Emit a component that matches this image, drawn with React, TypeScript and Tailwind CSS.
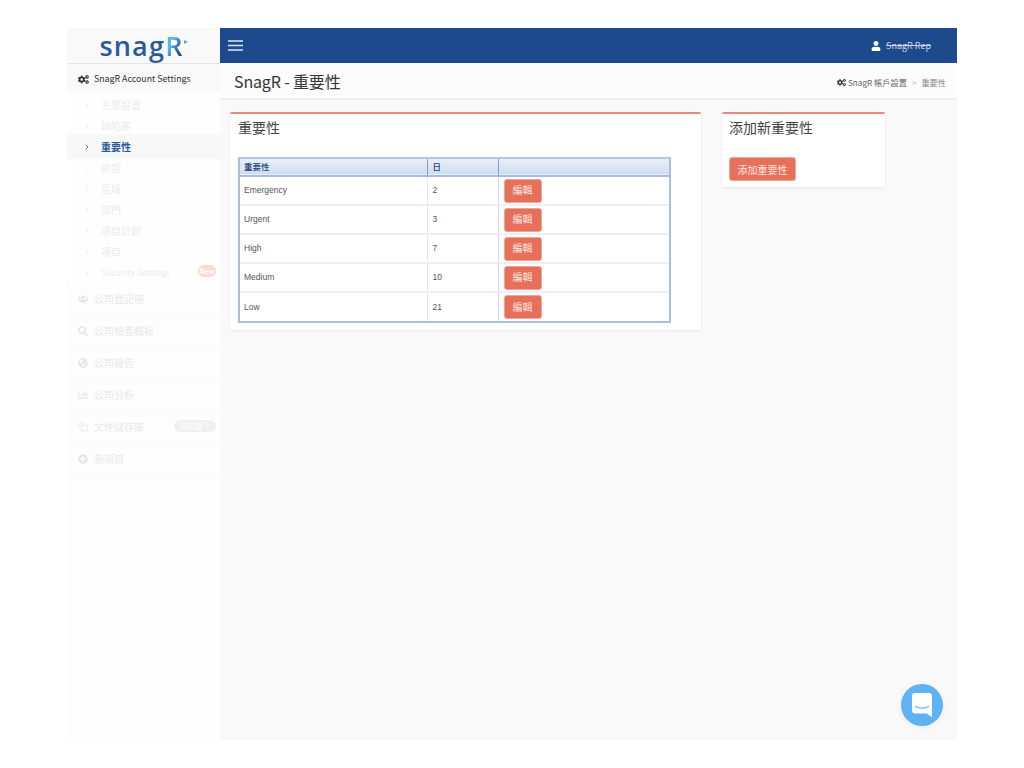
import { ChevronRight, Copy } from 'lucide-react'
import { FaChartBar, FaCogs, FaGlobeAmericas, FaPlusCircle, FaSearch, FaUser, FaUsers } from 'react-icons/fa'

const subItems = ['主要設置', '缺陷庫', '重要性', '術語', '區域', '部門', '項目計劃', '項目', 'Security Settings']

const rows = [
  { name: 'Emergency', days: 2 },
  { name: 'Urgent', days: 3 },
  { name: 'High', days: 7 },
  { name: 'Medium', days: 10 },
  { name: 'Low', days: 21 },
]

const mainItems = [
  { label: '公司登記冊', icon: FaUsers },
  { label: '公司檢查模板', icon: FaSearch },
  { label: '公司報告', icon: FaGlobeAmericas },
  { label: '公司分析', icon: FaChartBar },
  { label: '文件儲存庫', icon: Copy, badge: '測試版！' },
  { label: '新項目', icon: FaPlusCircle },
]

function Sidebar() {
  return (
    <aside className="w-[153px] shrink-0 bg-[#fdfdfd] flex flex-col">
      {/* Logo */}
      <div className="h-[36px] bg-[#f9f9f9] border-b border-[#e6e6e6] flex items-center justify-center">
        <span className="font-['Open_Sans',sans-serif] font-semibold text-[27px] leading-[34px] tracking-[1.2px] text-[#2a5a9c]">
          snag
          <span className="bg-gradient-to-br from-[#5ab4ea] from-40% to-[#23508f] to-70% bg-clip-text text-transparent">R</span>
        </span>
        <svg viewBox="0 0 4 4" className="h-[4px] w-[4px] -mt-[7px] text-[#5aa9e6]">
          <path d="M0 0l4 2-4 2Z" fill="currentColor" />
        </svg>
      </div>

      <div className="h-[27px] bg-[#f9f9f9] flex items-center pl-[11px] gap-[5px] pt-[3px]">
        <FaCogs className="h-[11px] w-[11px] text-[#333]" />
        <span className="text-[8.8px] text-[#333]">SnagR Account Settings</span>
      </div>

      {/* Sub menu */}
      <div className="flex flex-col pt-[3px] bg-[#fefefe]">
        {subItems.map((item) => {
          const active = item === '重要性'
          return (
            <div
              key={item}
              className={`relative flex items-center pl-[16px] gap-[10px] ${
                active ? 'h-[25px] -my-[2px] bg-[#f8f8f8]' : 'h-[21px]'
              }`}
            >
              <ChevronRight className={`h-[8px] w-[8px] ${active ? 'text-[#2a5a9c]' : 'text-[#e9e9e9]'}`} strokeWidth={2.5} />
              <span
                className={`${item === 'Security Settings' ? 'text-[8.8px]' : 'text-[10px]'} ${
                  active ? 'font-bold text-[#2a5a9c]' : 'text-[#ececec]'
                }`}
              >
                {item}
              </span>
              {item === 'Security Settings' && (
                <span className="absolute right-[4px] top-[3px] h-[12px] w-[18px] rounded-full bg-[#f9d9d3] text-center text-[7px] leading-[12px] font-bold text-white">
                  New
                </span>
              )}
            </div>
          )
        })}
      </div>

      {/* Main menu */}
      {mainItems.map(({ label, icon: Icon, badge }) => (
        <div key={label} className="h-[32px] shrink-0 relative flex items-center pl-[11px] gap-[6px] border-b border-[#fbfbfb] bg-[#fdfdfd]">
          <Icon className="h-[10px] w-[10px] text-[#e6e6e6]" />
          <span className="text-[10px] text-[#e9e9e9]">{label}</span>
          {badge && (
            <span className="absolute right-[4px] top-[9px] rounded-full bg-[#f0f0f0] px-[5px] text-[8px] leading-[12px] text-white">
              {badge}
            </span>
          )}
        </div>
      ))}
    </aside>
  )
}

function EditButton({ label, wide }: { label: string; wide?: boolean }) {
  return (
    <button
      className={`block bg-[#e6705a] border border-[#f0a596] rounded-[3px] text-[#fbe6e1] text-[10px] h-[24px] ${
        wide ? 'w-[67px]' : 'w-[38px]'
      }`}
    >
      {label}
    </button>
  )
}

export default function App() {
  return (
    <div className="h-[768px] bg-white pt-[28px] pb-[28px] px-[67px] font-['Noto_Sans_CJK_TC',sans-serif]">
      <div className="h-[712px] flex bg-[#f9f9f9] overflow-hidden relative">
        <Sidebar />

        <div className="flex-1 flex flex-col min-w-0">
          {/* Top bar */}
          <header className="h-[35px] bg-[#1d4a8c] flex items-center justify-between pl-[8px] pr-[26px]">
            <svg viewBox="0 0 15 11" className="h-[11px] w-[15px] text-[#dfe7f2]">
              <path d="M0 1h15M0 5.5h15M0 10h15" stroke="currentColor" strokeWidth="1.4" />
            </svg>
            <div className="flex items-center gap-[5px]">
              <FaUser className="h-[10px] w-[10px] text-white" />
              <span className="text-[9px] text-[#c9d5e6] line-through">SnagR Rep</span>
            </div>
          </header>

          {/* Page title */}
          <div className="h-[37px] bg-[#fcfcfc] border-b-2 border-[#eeeeee] flex items-center justify-between pl-[14px] pr-[11px]">
            <h1 className="text-[16px] tracking-[-0.15px] font-normal text-[#333] pt-[1px]">SnagR - 重要性</h1>
            <div className="flex items-center text-[8.2px] text-[#666] mt-[4px]">
              <FaCogs className="h-[9px] w-[9px] mr-[2px] text-[#333]" />
              <span>SnagR 帳戶設置</span>
              <span className="mx-[5px] text-[#ccc]">&gt;</span>
              <span className="text-[#888]">重要性</span>
            </div>
          </div>

          {/* Content */}
          <div className="flex items-start pl-[10px] pt-[12px]">
            <section className="w-[471px] h-[218px] bg-white border-t-2 border-[#e98a78] rounded-[2px] shadow-[0_1px_3px_rgba(0,0,0,0.08)] px-[8px] pt-[2px]">
              <h2 className="text-[14px] leading-[22px] font-normal text-[#444]">重要性</h2>
              <div className="mt-[19px] w-[433px] border-2 border-[#a9bfdc] border-t-[#b4c7e2]">
                <table className="w-full table-fixed border-collapse font-['Liberation_Sans','Noto_Sans_CJK_TC',sans-serif] text-[8.5px] text-[#555]">
                  <colgroup>
                    <col className="w-[187px]" />
                    <col className="w-[71px]" />
                    <col />
                  </colgroup>
                  <thead>
                    <tr className="h-[17px] bg-gradient-to-b from-[#e9eff8] to-[#d0ddf0] border-b-2 border-[#a6bbe0] text-[#1d3f80]">
                      <th className="text-left font-medium pl-[4px] border-r border-[#7f9fcf]">重要性</th>
                      <th className="text-left font-medium pl-[5px] border-r border-[#7f9fcf]">日</th>
                      <th />
                    </tr>
                  </thead>
                  <tbody>
                    {rows.map((row, i) => (
                      <tr key={row.name} className={`h-[29px] ${i < rows.length - 1 ? 'border-b-2 border-[#eeeff6]' : ''}`}>
                        <td className="pl-[4px] border-r border-[#e3e6f2]">{row.name}</td>
                        <td className="pl-[5px] border-r border-[#cfd9ec]">{row.days}</td>
                        <td className="pl-[5px]">
                          <EditButton label="編輯" />
                        </td>
                      </tr>
                    ))}
                  </tbody>
                </table>
              </div>
            </section>

            <section className="ml-[21px] w-[163px] h-[75px] bg-white border-t-2 border-[#e98a78] rounded-[2px] shadow-[0_1px_3px_rgba(0,0,0,0.08)] px-[7px] pt-[2px]">
              <h2 className="text-[14px] leading-[22px] font-normal text-[#444]">添加新重要性</h2>
              <div className="mt-[19px]">
                <EditButton label="添加重要性" wide />
              </div>
            </section>
          </div>
        </div>

        {/* Chat launcher */}
        <div className="absolute right-[14px] bottom-[14px] h-[42px] w-[42px] rounded-full bg-[#5db3f3] shadow-[0_1px_6px_rgba(0,0,0,0.06)] flex items-center justify-center">
          <svg viewBox="0 0 20 24" className="h-[24px] w-[20px]">
            <path d="M3 0h14a3 3 0 0 1 3 3v21l-5.5-3.5H3a3 3 0 0 1-3-3V3a3 3 0 0 1 3-3Z" fill="white" />
            <path d="M3.5 13.5c4 2 9 2 13 0" fill="none" stroke="#5db3f3" strokeWidth="1.2" strokeLinecap="round" />
          </svg>
        </div>
      </div>
    </div>
  )
}
